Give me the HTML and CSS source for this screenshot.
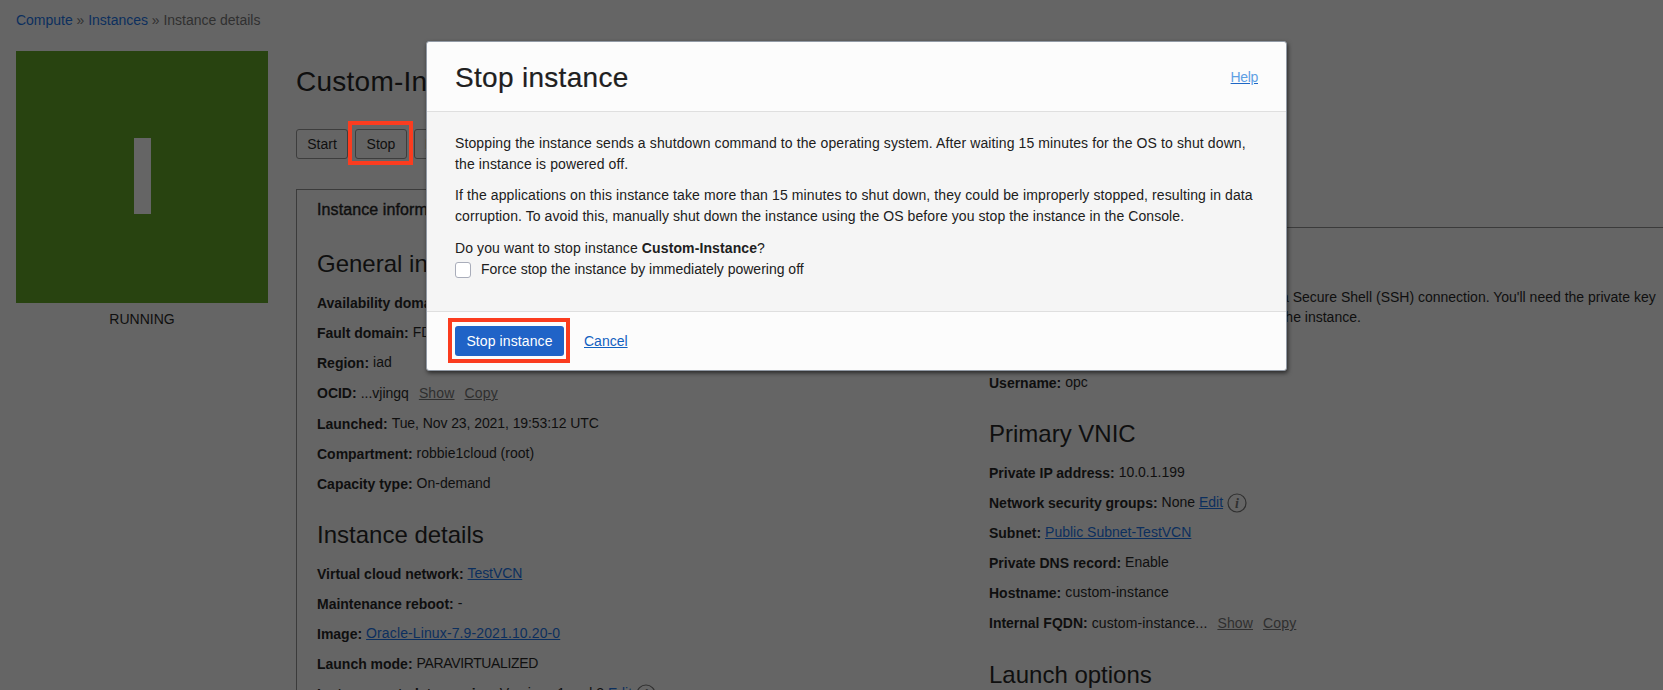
FILE: index.html
```html
<!DOCTYPE html>
<html lang="en">
<head>
<meta charset="utf-8">
<title>Instance details</title>
<link rel="stylesheet" href="styles.css">
</head>
<body>
<div class="page">
  <nav class="breadcrumb"><a>Compute</a> » <a>Instances</a> » <span>Instance details</span></nav>
  <div class="content">
    <aside class="side">
      <div class="tile"><span class="tile-mark"></span></div>
      <div class="status">RUNNING</div>
    </aside>
    <main class="main">
      <h1 class="title">Custom-Instance</h1>
      <div class="actions">
        <button class="btn">Start</button>
        <button class="btn marked">Stop</button>
        <button class="btn">Reboot</button>
      </div>
      <div class="tabs"><div class="tab">Instance information</div><div class="tab-rest"></div></div>
      <div class="panel">
        <div class="col">
          <h2 class="heading">General information</h2>
          <div class="row"><b>Availability domain:</b><span class="val">AD-1</span></div>
          <div class="row"><b>Fault domain:</b><span class="val">FD-1</span></div>
          <div class="row"><b>Region:</b><span class="val">iad</span></div>
          <div class="row row-tall"><b>OCID:</b><span class="val low">...vjingq</span><a class="muted">Show</a><a class="muted">Copy</a></div>
          <div class="row"><b>Launched:</b><span class="val snug">Tue, Nov 23, 2021, 19:53:12 UTC</span></div>
          <div class="row"><b>Compartment:</b><span class="val">robbie1cloud (root)</span></div>
          <div class="row"><b>Capacity type:</b><span class="val">On-demand</span></div>
          <h2 class="heading next">Instance details</h2>
          <div class="row"><b>Virtual cloud network:</b><a class="val link snug">TestVCN</a></div>
          <div class="row"><b>Maintenance reboot:</b><span class="val">-</span></div>
          <div class="row"><b>Image:</b><a class="val link wide">Oracle-Linux-7.9-2021.10.20-0</a></div>
          <div class="row"><b>Launch mode:</b><span class="val caps">PARAVIRTUALIZED</span></div>
          <div class="row"><b>Instance metadata service:</b><span class="val">Versions 1 and 2 <a class="link">Edit</a></span><svg class="info" viewBox="0 0 20 20"><circle cx="10" cy="10" r="9"/><text x="10" y="14.5">i</text></svg></div>
        </div>
        <div class="col">
          <h2 class="heading">Instance access</h2>
          <p class="access">You connect to a running Linux instance using a Secure Shell (SSH) connection. You'll need the private key<br>from the SSH key pair that was used to create the instance.</p>
          <div class="row"><b>Public IP address:</b><span class="val">-</span></div>
          <div class="row"><b>Username:</b><span class="val">opc</span></div>
          <h2 class="heading next">Primary VNIC</h2>
          <div class="row"><b>Private IP address:</b><span class="val">10.0.1.199</span></div>
          <div class="row"><b>Network security groups:</b><span class="val">None <a class="link">Edit</a></span><svg class="info" viewBox="0 0 20 20"><circle cx="10" cy="10" r="9"/><text x="10" y="14.5">i</text></svg></div>
          <div class="row"><b>Subnet:</b><a class="val link">Public Subnet-TestVCN</a></div>
          <div class="row"><b>Private DNS record:</b><span class="val">Enable</span></div>
          <div class="row"><b>Hostname:</b><span class="val wide">custom-instance</span></div>
          <div class="row row-tall"><b>Internal FQDN:</b><span class="val low wide">custom-instance...</span><a class="muted">Show</a><a class="muted">Copy</a></div>
          <h2 class="heading next">Launch options</h2>
        </div>
      </div>
    </main>
  </div>
</div>
<section class="modal">
  <header class="modal-head"><h2 class="modal-title">Stop instance</h2><a class="help">Help</a></header>
  <div class="modal-body">
    <p class="para first">Stopping the instance sends a shutdown command to the operating system. After waiting 15 minutes for the OS to shut down,<br>the instance is powered off.</p>
    <p class="para">If the applications on this instance take more than 15 minutes to shut down, they could be improperly stopped, resulting in data<br><span class="tight">corruption. To avoid this, manually shut down the instance using the OS before you stop the instance in the Console.</span></p>
    <p class="para ask">Do you want to stop instance <b>Custom-Instance</b>?</p>
    <div class="check"><span class="box"></span>Force stop the instance by immediately powering off</div>
  </div>
  <footer class="modal-foot"><button class="primary marked">Stop instance</button><a class="cancel">Cancel</a></footer>
</section>
</body>
</html>
```
FILE: styles.css
```css
* { box-sizing: border-box; }
html { overflow: hidden; }
body {
  margin: 0;
  height: 690px;
  overflow: hidden;
  background: #656565;
  color: #0f0f0f;
  font: 14px/20px "Liberation Sans", Arial, sans-serif;
}
.page { height: 690px; overflow: hidden; padding: 10px 0 0 16px; }
.breadcrumb { color: #303030; height: 41px; white-space: pre; letter-spacing: -0.02px; }
.breadcrumb a { color: #0c2f5e; }
.content { display: flex; gap: 28px; }
.side { width: 252px; flex: none; }
.tile {
  height: 252px;
  background: #284310;
  display: flex;
  align-items: center;
  justify-content: center;
}
.tile-mark { width: 17px; height: 76px; background: #656565; margin-top: -2px; }
.status { text-align: center; margin-top: 6px; }
.main { flex: 1; min-width: 0; }
.title { margin: 13px 0 0; font-size: 28px; line-height: 36px; font-weight: 400; letter-spacing: 0.25px; }
.actions { display: flex; gap: 7px; margin-top: 29px; }
.btn {
  height: 30px;
  min-width: 52px;
  padding: 0 10px;
  border: 1px solid #3d3d3d;
  border-radius: 3px;
  background: none;
  color: inherit;
  font: inherit;
}
/* Square highlight frame drawn over the button's surroundings */
.marked { position: relative; }
.marked::after {
  content: "";
  position: absolute;
  inset: -9px -7px -7px -8px;
  border: 4px solid #fb3c1f;
}
.primary.marked::after { inset: -8px -6px -7px -7px; }
.tabs { display: flex; height: 39px; margin-top: 30px; }
.tab {
  width: 190px;
  border: 1px solid #3b3b3b;
  border-bottom: 0;
  padding: 10px 0 0 20px;
  font-size: 16px;
  letter-spacing: 0.1px;
  white-space: nowrap;
  -webkit-text-stroke: 0.4px #0f0f0f;
}
.tab-rest { flex: 1; border-bottom: 1px solid #3b3b3b; }
.panel {
  border-left: 1px solid #3b3b3b;
  display: grid;
  grid-template-columns: 672px 1fr;
  padding: 20px 0 0 20px;
  height: 500px;
}
.heading { margin: 0; font-size: 24px; line-height: 32px; font-weight: 400; height: 40px; }
.heading.next { margin-top: 20px; }
.row { display: flex; height: 30px; line-height: 30px; white-space: pre; }
.row-tall { height: 31px; }
.row b { margin-right: 4px; letter-spacing: -0.01px; }
.val { line-height: 28px; }
.val.low { line-height: 30px; }
.val.snug { letter-spacing: -0.08px; }
.val.wide { letter-spacing: 0.12px; }
.val.caps { letter-spacing: -0.36px; }
.link { color: #0c2f5e; text-decoration: underline; }
.muted { color: #2f2f2f; text-decoration: underline; margin-left: 10px; letter-spacing: 0.15px; }
.info { width: 20px; height: 20px; margin: 5px 0 0 4px; fill: none; stroke: #303030; stroke-width: 1.2; }
.info text { font: italic bold 14px "Liberation Serif", serif; fill: #303030; stroke: none; text-anchor: middle; }
.access { margin: -1px 0 0; padding-left: 3px; height: 51px; white-space: nowrap; }
.modal {
  position: absolute;
  left: 426px;
  top: 41px;
  width: 861px;
  height: 330px;
  display: flex;
  flex-direction: column;
  background: #fcfcfc;
  border: 1px solid #929aa5;
  border-radius: 3px;
  box-shadow: 1px 2px 4px rgba(0, 0, 0, 0.6);
  color: #202020;
  overflow: hidden;
}
.modal-head { height: 70px; padding: 0 28px; display: flex; align-items: center; justify-content: space-between; border-bottom: 1px solid #dfdfdf; }
.modal-title { margin: 2px 0 0; font-size: 28px; font-weight: 400; letter-spacing: 0.3px; -webkit-text-stroke: 0.2px #202020; }
.help { color: #5fa0e4; text-decoration: underline #1f66c4; letter-spacing: -0.35px; }
.modal-body { height: 200px; padding: 21px 0 0 28px; background: #f5f5f5; border-bottom: 1px solid #dfdfdf; }
.para { margin: 0 0 11px; line-height: 21px; white-space: nowrap; letter-spacing: 0.11px; }
.para.first { margin-bottom: 10px; }
.para.ask { margin: 0; }
.tight { letter-spacing: 0.075px; }
.check { display: flex; align-items: center; gap: 10px; line-height: 21px; }
.box { width: 16px; height: 16px; border: 1px solid #a9adba; border-radius: 3px; background: #fff; }
.modal-foot { flex: 1; display: flex; align-items: center; gap: 20px; padding-left: 28px; }
.primary {
  width: 109px;
  height: 30px;
  padding: 0;
  border: 0;
  border-radius: 3px;
  background: #2063c7;
  color: #fff;
  font: inherit;
  letter-spacing: 0.1px;
}
.cancel { color: #1160c0; text-decoration: underline; }
```
